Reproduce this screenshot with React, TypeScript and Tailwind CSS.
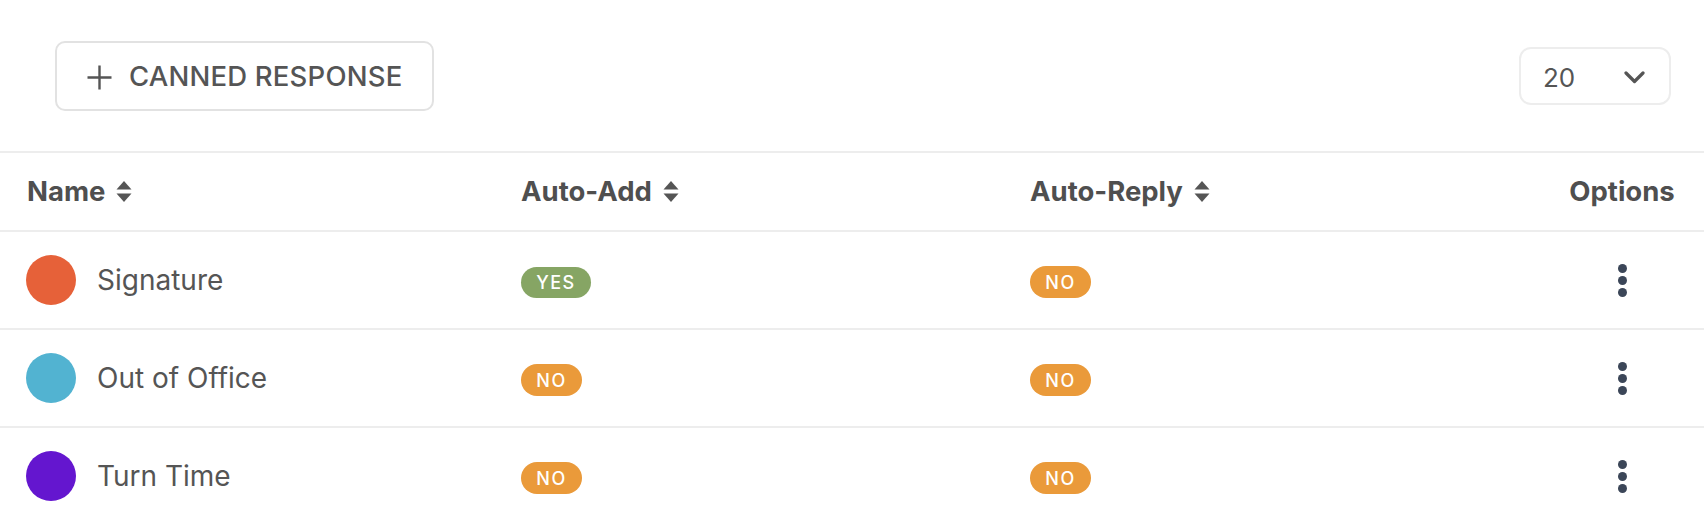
type Row = {
  name: string;
  color: string;
  autoAdd: boolean;
  autoReply: boolean;
};

const rows: Row[] = [
  { name: 'Signature', color: 'bg-[#e66139]', autoAdd: true, autoReply: false },
  { name: 'Out of Office', color: 'bg-[#52b3d1]', autoAdd: false, autoReply: false },
  { name: 'Turn Time', color: 'bg-[#6416cf]', autoAdd: false, autoReply: false },
];

function SortIcon() {
  return (
    <svg width="16" height="21" viewBox="0 0 16 21" className="ml-[11px] shrink-0">
      <path d="M8 0 L15.5 8.5 L0.5 8.5 Z" fill="#555555" />
      <path d="M8 21 L15.5 12.5 L0.5 12.5 Z" fill="#555555" />
    </svg>
  );
}

function Badge({ yes }: { yes: boolean }) {
  return yes ? (
    <span className="inline-flex items-center justify-center h-[31px] w-[70px] rounded-full bg-[#86a564] text-white text-[18px] font-medium tracking-[1.5px]">
      YES
    </span>
  ) : (
    <span className="inline-flex items-center justify-center h-[32px] w-[61px] rounded-full bg-[#ea9a3a] text-white text-[18px] font-medium tracking-[1.5px]">
      NO
    </span>
  );
}

function Kebab() {
  return (
    <div className="flex flex-col items-center gap-[3px]">
      <span className="w-[9px] h-[9px] rounded-full bg-[#3b4658]" />
      <span className="w-[9px] h-[9px] rounded-full bg-[#3b4658]" />
      <span className="w-[9px] h-[9px] rounded-full bg-[#3b4658]" />
    </div>
  );
}

const cols = 'grid grid-cols-[494px_509px_1fr_auto]';

export default function App() {
  return (
    <div className="w-[1704px] h-[524px] bg-white text-[#555555] font-['Inter',sans-serif] overflow-hidden">
      <div className="h-[153px] flex items-center justify-between pl-[55px] pr-[33px] border-b-2 border-[#ededed]">
        <button className="h-[70px] w-[379px] flex items-center pl-[30px] rounded-[10px] border-2 border-[#e2e2e2] bg-white">
          <svg width="25" height="25" viewBox="0 0 25 25" className="shrink-0 mt-[3px]">
            <path d="M12.5 0.5 V24.5 M0.5 12.5 H24.5" stroke="#555555" strokeWidth="2.4" />
          </svg>
          <span className="ml-[17px] pt-[3px] text-[27.5px] font-medium tracking-[0.2px] text-[#555555]">CANNED RESPONSE</span>
        </button>
        <div className="h-[58px] w-[152px] flex items-center justify-between pl-[22px] pr-[24px] pt-[3px] rounded-[12px] border-2 border-[#ededed]">
          <span className="text-[26px]">20</span>
          <svg width="21" height="13" viewBox="0 0 21 13" className="shrink-0">
            <path d="M2 2 L10.5 10.5 L19 2" fill="none" stroke="#555555" strokeWidth="3.2" strokeLinecap="round" strokeLinejoin="round" />
          </svg>
        </div>
      </div>

      <div className={`${cols} h-[79px] items-center border-b-2 border-[#ededed] text-[27.5px] font-bold text-[#4f4f4f]`}>
        <div className="pl-[27px] flex items-center">
          Name
          <SortIcon />
        </div>
        <div className="pl-[27px] flex items-center">
          Auto-Add
          <SortIcon />
        </div>
        <div className="pl-[27px] flex items-center">
          Auto-Reply
          <SortIcon />
        </div>
        <div className="pr-[29px] flex justify-end">
          <span className="w-[106px] text-center">Options</span>
        </div>
      </div>

      {rows.map((r) => (
        <div key={r.name} className={`${cols} h-[98px] items-center border-b-2 border-[#ededed]`}>
          <div className="pl-[26px] flex items-center">
            <span className={`w-[50px] h-[50px] rounded-full ${r.color}`} />
            <span className="ml-[21px] text-[28px] text-[#555555]">{r.name}</span>
          </div>
          <div className="pl-[27px] pt-[4px] flex items-center">
            <Badge yes={r.autoAdd} />
          </div>
          <div className="pl-[27px] pt-[4px] flex items-center">
            <Badge yes={r.autoReply} />
          </div>
          <div className="pr-[29px] flex justify-end">
            <div className="w-[106px] flex justify-center">
              <Kebab />
            </div>
          </div>
        </div>
      ))}
    </div>
  );
}
